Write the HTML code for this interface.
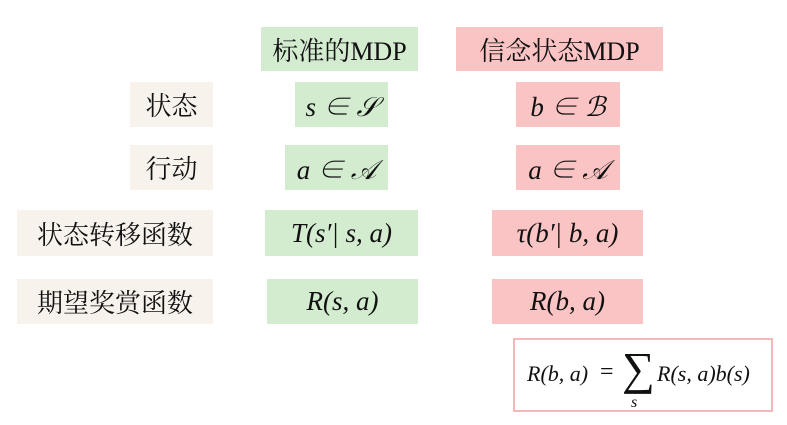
<!DOCTYPE html>
<html><head><meta charset="utf-8"><style>
body{margin:0;width:787px;height:425px;background:#fff;position:relative;overflow:hidden;font-family:"Liberation Serif","Noto Serif CJK SC",serif;color:#111}
.b{position:absolute;display:flex;align-items:center;justify-content:center;font-size:26px;white-space:nowrap}
.g{background:#d3ecd0}.p{background:#fbc4c4}.w{background:#f7f2ec}
.m{font-style:italic;font-size:27px}
.f{position:absolute;left:513px;top:338px;width:260px;height:74px;border:2px solid #f5b8b8;box-sizing:border-box;font-style:italic;font-size:22px}
</style></head><body>
<div class="b g" style="left:261px;top:27px;width:157px;height:44px">标准的MDP</div>
<div class="b p" style="left:456px;top:27px;width:207px;height:44px">信念状态MDP</div>
<div class="b w" style="left:130px;top:82px;width:83px;height:45px">状态</div>
<div class="b g m" style="left:295px;top:82px;width:93px;height:45px">s ∈ 𝒮</div>
<div class="b p m" style="left:516px;top:82px;width:104px;height:45px">b ∈ ℬ</div>
<div class="b w" style="left:130px;top:145px;width:83px;height:45px">行动</div>
<div class="b g m" style="left:285px;top:145px;width:103px;height:45px">a ∈ 𝒜</div>
<div class="b p m" style="left:516px;top:145px;width:104px;height:45px">a ∈ 𝒜</div>
<div class="b w" style="left:17px;top:210px;width:196px;height:46px">状态转移函数</div>
<div class="b g m" style="left:265px;top:210px;width:153px;height:46px">T(s′| s, a)</div>
<div class="b p m" style="left:492px;top:210px;width:151px;height:46px">τ(b′| b, a)</div>
<div class="b w" style="left:17px;top:279px;width:196px;height:45px">期望奖赏函数</div>
<div class="b g m" style="left:267px;top:279px;width:151px;height:45px">R(s, a)</div>
<div class="b p m" style="left:492px;top:279px;width:151px;height:45px">R(b, a)</div>
<div class="f">
<span style="position:absolute;left:12px;top:21px">R(b, a)</span>
<span style="position:absolute;left:85px;top:19px;font-style:normal;font-size:24px">=</span>
<span style="position:absolute;left:107px;top:6px;font-style:normal;font-size:46px;line-height:46px">∑</span>
<span style="position:absolute;left:116px;top:54px;font-size:16px">s</span>
<span style="position:absolute;left:142px;top:21px">R(s, a)b(s)</span>
</div>
</body></html>
